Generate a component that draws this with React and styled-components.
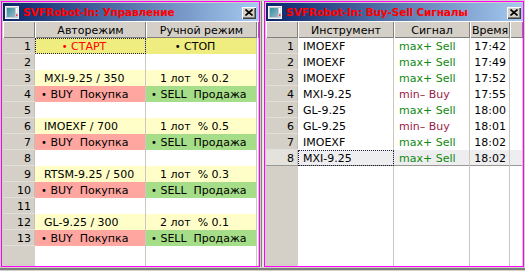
import React from 'react';
import styled, { createGlobalStyle } from 'styled-components';

const Global = createGlobalStyle`
  html, body { margin: 0; padding: 0; background: #d4d0c8; }
  body { width: 525px; height: 271px; overflow: hidden; font-family: "DejaVu Sans", Tahoma, sans-serif; }
  * { box-sizing: border-box; }
`;

const Page = styled.div`
  width: 525px;
  height: 271px;
  display: flex;
  flex-direction: column;
  background: #d4d0c8;
`;

const Desk = styled.div`
  display: flex;
  padding: 1px 1px 0 1px;
  height: 267px;
`;

const Window = styled.div`
  width: ${p => p.$w}px;
  height: 266px;
  border: 1px solid #ff00ff;
  padding: 1px 0 0 1px;
  display: flex;
  flex-direction: column;
  background: #d4d0c8;
`;

const Splitter = styled.div`
  width: 4px;
  height: 266px;
  background: linear-gradient(to right, #d4d0c8 0 1px, #808080 1px 2px, #ebe9e4 2px 4px);
`;

const BottomBar = styled.div`
  margin-top: 1px;
  height: 2px;
  background: #7c7c7c;
`;

const TitleBar = styled.div`
  height: 18px;
  flex: none;
  display: flex;
  align-items: center;
  padding: 0 ${p => p.$pr}px 0 2px;
  background: linear-gradient(to right, #0a246a, #a6caf0);
`;

const Title = styled.span`
  flex: 1;
  margin-left: 4px;
  color: #ff0000;
  font-weight: bold;
  font-size: 10.6px;
  letter-spacing: -0.2px;
  white-space: pre;
  line-height: 18px;
`;

const CloseBtn = styled.div`
  width: 14px;
  height: 12px;
  margin-top: 1px;
  background: #d4d0c8;
  box-shadow: inset 1px 1px #ffffff, inset -1px -1px #404040, inset -2px -2px #808080;
  display: flex;
  align-items: center;
  justify-content: center;
`;

const Grid = styled.div`
  flex: 1;
  display: grid;
  grid-template-columns: ${p => p.$cols};
  grid-template-rows: 17px repeat(${p => p.$rows}, 16px) 1fr;
  background: #ffffff;
  font-size: 11px;
  color: #000;
`;

const HeadCell = styled.div`
  background: #d4d0c8;
  box-shadow: inset 1px 1px #ffffff, inset -1px -1px #808080;
  display: flex;
  align-items: center;
  justify-content: center;
  padding-top: 1px;
  white-space: pre;
`;

const RowHead = styled.div`
  background: ${p => (p.$sel ? '#e4e2dc' : '#d4d0c8')};
  box-shadow: inset 0 -1px ${p => (p.$sel ? '#9a9892' : '#e2dfd8')}, inset -1px 0 #c4c0b8;
  display: flex;
  align-items: center;
  justify-content: flex-end;
  padding-right: 4px;
`;

const Cell = styled.div`
  background: ${p => p.$bg || '#ffffff'};
  color: ${p => p.$color || '#000000'};
  border-right: 1px solid #ccc8c0;
  display: flex;
  align-items: center;
  justify-content: ${p => (p.$align === 'center' ? 'center' : p.$align === 'right' ? 'flex-end' : 'flex-start')};
  padding-left: ${p => p.$pl || 0}px;
  padding-right: ${p => p.$pr || 0}px;
  white-space: pre;
  overflow: hidden;
  outline: ${p => (p.$focus ? '1px dotted #202040' : 'none')};
  outline-offset: -1px;
  box-shadow: ${p => (p.$sel ? 'inset 0 -1px #9a9892' : 'none')};
`;

const Filler = styled.div`
  background: ${p => (p.$head ? '#d4d0c8' : '#ffffff')};
  border-right: ${p => (p.$head ? 'none' : '1px solid #ccc8c0')};
`;

const Bullet = styled.span`
  color: ${p => p.$color || 'inherit'};
  font-size: 10px;
`;

const WinIcon = () => (
  <svg width="14" height="13" viewBox="0 0 14 13">
    <defs>
      <linearGradient id="ig" x1="0" y1="0" x2="1" y2="1">
        <stop offset="0" stopColor="#2f8f96" />
        <stop offset="1" stopColor="#9ab8cc" />
      </linearGradient>
    </defs>
    <rect x="0.5" y="0.5" width="13" height="12" fill="#c8ccd2" stroke="#f4f4f4" />
    <rect x="2" y="2" width="8" height="9" fill="url(#ig)" />
    <rect x="11" y="2" width="1.5" height="5" fill="#ffffff" />
    <rect x="11" y="8.5" width="1.5" height="1.5" fill="#ff3030" />
  </svg>
);

const XIcon = () => (
  <svg width="8" height="7" viewBox="0 0 8 7">
    <path d="M0.5 0.5 L7.5 6.5 M7.5 0.5 L0.5 6.5" stroke="#000" strokeWidth="1.6" />
  </svg>
);

const YELLOW = '#efec80';
const LIGHT = '#fffec8';
const PINK = '#ffa6a0';
const GREEN = '#a6dd88';

const buyCell = { text: 'BUY  Покупка', bullet: true, bg: PINK, pl: 6 };
const sellCell = { text: 'SELL  Продажа', bullet: true, bg: GREEN, pl: 5 };

const leftRows = [
  [
    { text: 'СТАРТ', bullet: true, bg: YELLOW, color: '#ff0000', align: 'center', pr: 12, focus: true },
    { text: 'СТОП', bullet: true, bg: YELLOW, align: 'center', pr: 12 },
  ],
  [{}, {}],
  [{ text: 'MXI-9.25 / 350', bg: LIGHT, pl: 9 }, { text: '1 лот  % 0.2', bg: LIGHT, pl: 14 }],
  [buyCell, sellCell],
  [{}, {}],
  [{ text: 'IMOEXF / 700', bg: LIGHT, pl: 9 }, { text: '1 лот  % 0.5', bg: LIGHT, pl: 14 }],
  [buyCell, sellCell],
  [{}, {}],
  [{ text: 'RTSM-9.25 / 500', bg: LIGHT, pl: 9 }, { text: '1 лот  % 0.3', bg: LIGHT, pl: 14 }],
  [buyCell, sellCell],
  [{}, {}],
  [{ text: 'GL-9.25 / 300', bg: LIGHT, pl: 9 }, { text: '2 лот  % 0.1', bg: LIGHT, pl: 14 }],
  [buyCell, sellCell],
];

const SELL = { text: 'max+ Sell', color: '#0f8a0f' };
const BUY = { text: 'min\u2013 Buy', color: '#9c1a44' };

const signals = [
  ['IMOEXF', SELL, '17:42'],
  ['IMOEXF', SELL, '17:49'],
  ['IMOEXF', SELL, '17:52'],
  ['MXI-9.25', BUY, '17:55'],
  ['GL-9.25', SELL, '18:00'],
  ['GL-9.25', BUY, '18:01'],
  ['IMOEXF', SELL, '18:02'],
  ['MXI-9.25', SELL, '18:02'],
];

const DataCell = ({ c }) => (
  <Cell $bg={c.bg} $color={c.color} $align={c.align} $pl={c.pl} $pr={c.pr} $focus={c.focus}>
    {c.bullet ? (
      <span>
        <Bullet $color={c.color}>•</Bullet>
        {' ' + c.text}
      </span>
    ) : (
      c.text || ''
    )}
  </Cell>
);

export default function App() {
  return (
    <Page>
      <Global />
      <Desk>
        <Window $w={259}>
          <TitleBar $pr={3}>
            <WinIcon />
            <Title>SVFRobot-In: Управление</Title>
            <CloseBtn><XIcon /></CloseBtn>
          </TitleBar>
          <Grid $cols="32px 111px 111px 2px" $rows={leftRows.length}>
            <HeadCell />
            <HeadCell>Авторежим</HeadCell>
            <HeadCell>Ручной режим</HeadCell>
            <HeadCell />
            {leftRows.map((r, i) => (
              <React.Fragment key={i}>
                <RowHead>{i + 1}</RowHead>
                <DataCell c={r[0]} />
                <DataCell c={r[1]} />
                <Filler />
              </React.Fragment>
            ))}
            <Filler $head />
            <Filler />
            <Filler />
            <Filler />
          </Grid>
        </Window>
        <Splitter />
        <Window $w={260}>
          <TitleBar $pr={2}>
            <WinIcon />
            <Title>SVFRobot-In: Buy-Sell Сигналы</Title>
            <CloseBtn><XIcon /></CloseBtn>
          </TitleBar>
          <Grid $cols="32px 96px 76px 40px 13px" $rows={signals.length}>
            <HeadCell />
            <HeadCell>Инструмент</HeadCell>
            <HeadCell>Сигнал</HeadCell>
            <HeadCell>Время</HeadCell>
            <HeadCell />
            {signals.map((s, i) => {
              const sel = i === signals.length - 1;
              const bg = sel ? '#eeeef0' : undefined;
              return (
                <React.Fragment key={i}>
                  <RowHead $sel={sel}>{i + 1}</RowHead>
                  <Cell $bg={bg} $pl={5} $sel={sel} $focus={sel}>{s[0]}</Cell>
                  <Cell $bg={bg} $pl={5} $sel={sel} $color={s[1].color}>{s[1].text}</Cell>
                  <Cell $bg={bg} $align="right" $pr={3} $sel={sel}>{s[2]}</Cell>
                  <Cell $bg={bg} $sel={sel} />
                </React.Fragment>
              );
            })}
            <Filler $head />
            <Filler />
            <Filler />
            <Filler />
            <Filler />
          </Grid>
        </Window>
      </Desk>
      <BottomBar />
    </Page>
  );
}
